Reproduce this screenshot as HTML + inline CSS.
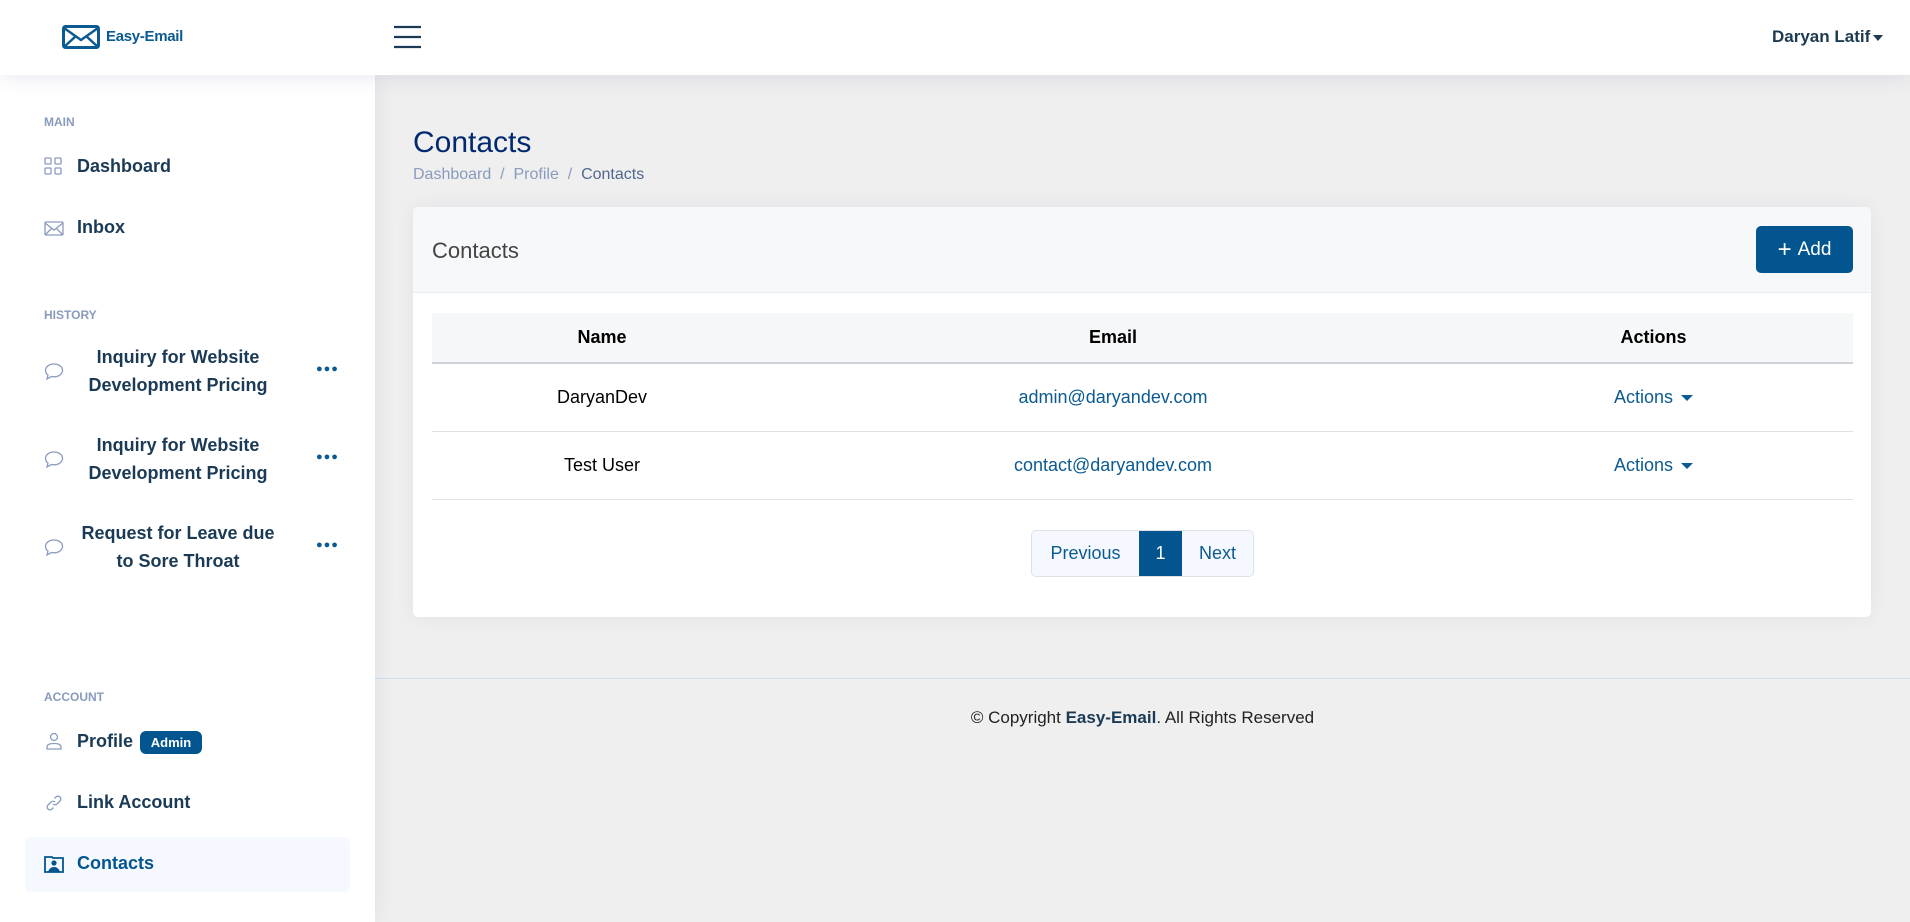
<!DOCTYPE html>
<html><head><meta charset="utf-8"><style>
*{box-sizing:border-box;margin:0;padding:0}
body{width:1910px;height:922px;overflow:hidden;background:#efefef;font-family:"Liberation Sans",Arial,sans-serif;position:relative}
.hdr{position:absolute;left:0;top:0;width:1910px;height:75px;background:#fff;box-shadow:0 2px 20px rgba(1,41,112,.1);z-index:3}
.side{position:absolute;left:0;top:75px;width:375px;height:847px;background:#fff;box-shadow:0 0 20px rgba(1,41,112,.08);z-index:2}
.abs{position:absolute;white-space:nowrap}
.lbl{font-size:12px;font-weight:bold;color:#899bbd;left:44px}
.nav{font-size:18px;font-weight:bold;color:#1b3a55;left:77px;line-height:22px}
.hist{position:absolute;left:64px;width:228px;text-align:center;font-size:18px;font-weight:bold;color:#1b3a55;line-height:28px}
.dots{position:absolute;left:316px;font-size:11px;font-weight:bold;color:#0b5a92;letter-spacing:1px}
.card{position:absolute;left:413px;top:207px;width:1458px;height:410px;background:#fff;border-radius:5px;box-shadow:0 0 20px rgba(1,41,112,.06);overflow:hidden}
.ch{height:86px;background:#f6f8fa;border-bottom:1px solid #e8edf5;position:relative}
table{position:absolute;left:19px;top:106px;width:1421px;border-collapse:collapse;font-size:18px}
th{height:50px;background:#f6f7f9;border-bottom:2px solid #cfd2d6;font-weight:bold;color:#000}
td{height:68px;text-align:center;border-bottom:1px solid #dee2e6;color:#000}
a{color:#0b5a92;text-decoration:none}
.caret{display:inline-block;width:0;height:0;border-left:6px solid transparent;border-right:6px solid transparent;border-top:6px solid currentColor;vertical-align:middle;margin-left:8px}
</style></head><body>
<div class="hdr">
<svg class="abs" style="left:62px;top:25px" width="38" height="24" viewBox="0 0 38 24"><rect x="1.5" y="1.5" width="35" height="21" rx="2" fill="none" stroke="#0b5a92" stroke-width="3"/><path d="M2 3 L19 15 L36 3 M2 22 L14 11 M36 22 L24 11" fill="none" stroke="#0b5a92" stroke-width="2.5"/></svg>
<div class="abs" style="left:106px;top:28px;font-size:15px;font-weight:bold;color:#0b5a92;letter-spacing:-0.3px">Easy-Email</div>
<svg class="abs" style="left:393px;top:25px" width="29" height="24"><path d="M1 2H28M1 12H28M1 22H28" stroke="#1b3a55" stroke-width="2.2"/></svg>
<div class="abs" style="left:1772px;top:27px;font-size:17px;font-weight:bold;color:#1e3a50">Daryan Latif<span class="caret" style="margin-left:3px;border-width:6px 5px 0 5px"></span></div>
</div>
<div class="side">
<div class="abs lbl" style="top:40px">MAIN</div>
<svg class="abs" style="left:44px;top:82px" width="18" height="18" fill="none" stroke="#8a9bbf" stroke-width="1.3"><rect x="1" y="1" width="6" height="6" rx="1"/><rect x="11" y="1" width="6" height="6" rx="1"/><rect x="1" y="11" width="6" height="6" rx="1"/><rect x="11" y="11" width="6" height="6" rx="1"/></svg>
<div class="abs nav" style="top:80px">Dashboard</div>
<svg class="abs" style="left:44px;top:146px" width="20" height="15" fill="none" stroke="#8a9bbf" stroke-width="1.3"><rect x="1" y="1" width="18" height="13" rx="1"/><path d="M1 2L10 9L19 2M1 14L8 7M19 14L12 7"/></svg>
<div class="abs nav" style="top:141px">Inbox</div>
<div class="abs lbl" style="top:233px">HISTORY</div>
<svg class="abs" style="left:44px;top:287px" width="20" height="18" fill="none" stroke="#8a9bbf" stroke-width="1.3"><path d="M10 2C5 2 1.5 5 1.5 8.5c0 2 1 3.5 2.5 4.5L3 17l4.5-2.5c.8.2 1.6.3 2.5.3 5 0 8.5-3 8.5-6.5S15 2 10 2z"/></svg>
<div class="hist" style="top:268px">Inquiry for Website<br>Development Pricing</div>
<div class="dots" style="top:288px">●●●</div>
<svg class="abs" style="left:44px;top:375px" width="20" height="18" fill="none" stroke="#8a9bbf" stroke-width="1.3"><path d="M10 2C5 2 1.5 5 1.5 8.5c0 2 1 3.5 2.5 4.5L3 17l4.5-2.5c.8.2 1.6.3 2.5.3 5 0 8.5-3 8.5-6.5S15 2 10 2z"/></svg>
<div class="hist" style="top:356px">Inquiry for Website<br>Development Pricing</div>
<div class="dots" style="top:376px">●●●</div>
<svg class="abs" style="left:44px;top:463px" width="20" height="18" fill="none" stroke="#8a9bbf" stroke-width="1.3"><path d="M10 2C5 2 1.5 5 1.5 8.5c0 2 1 3.5 2.5 4.5L3 17l4.5-2.5c.8.2 1.6.3 2.5.3 5 0 8.5-3 8.5-6.5S15 2 10 2z"/></svg>
<div class="hist" style="top:444px">Request for Leave due<br>to Sore Throat</div>
<div class="dots" style="top:464px">●●●</div>
<div class="abs lbl" style="top:615px">ACCOUNT</div>
<svg class="abs" style="left:46px;top:657px" width="16" height="18" fill="none" stroke="#8a9bbf" stroke-width="1.3"><circle cx="8" cy="5" r="3.5"/><path d="M1 17v-2c0-2 2-3.5 7-3.5s7 1.5 7 3.5v2z"/></svg>
<div class="abs nav" style="top:655px">Profile</div>
<div class="abs" style="left:140px;top:656px;width:62px;height:23px;background:#03558f;border-radius:6px;color:#fff;font-size:13px;font-weight:bold;text-align:center;line-height:23px">Admin</div>
<svg class="abs" style="left:46px;top:720px" width="16" height="16" fill="none" stroke="#8a9bbf" stroke-width="1.3"><path d="M7 9a3 3 0 0 0 4 0l3-3a2.8 2.8 0 0 0-4-4L8.5 3.5M9 7a3 3 0 0 0-4 0L2 10a2.8 2.8 0 0 0 4 4l1.5-1.5"/></svg>
<div class="abs nav" style="top:716px">Link Account</div>
<div class="abs" style="left:25px;top:762px;width:325px;height:55px;background:#f5f8fe;border-radius:5px"></div>
<svg class="abs" style="left:44px;top:780px" width="20" height="18"><path d="M1 2h7l1 1h10v14H1z" fill="none" stroke="#03558f" stroke-width="1.8"/><circle cx="10" cy="8" r="2.6" fill="#03558f"/><path d="M4 17c1-3.5 3.5-5 6-5s5 1.5 6 5z" fill="#03558f"/></svg>
<div class="abs nav" style="top:777px;color:#03558f">Contacts</div>
</div>
<div class="abs" style="left:413px;top:126px;font-size:30px;color:#012970">Contacts</div>
<div class="abs" style="left:413px;top:166px;font-size:16px;color:#899bbd">Dashboard&nbsp; / &nbsp;Profile&nbsp; / &nbsp;<span style="color:#51678f">Contacts</span></div>
<div class="card">
<div class="ch">
<div class="abs" style="left:19px;top:31px;font-size:22px;color:#444">Contacts</div>
<div class="abs" style="left:1343px;top:19px;width:97px;height:47px;background:#03558f;border-radius:5px;color:#fff;font-size:19px;line-height:47px;text-align:center"><span style="font-size:24px;vertical-align:-2px;margin-right:6px">+</span>Add</div>
</div>
<table>
<tr><th style="width:340px">Name</th><th style="width:682px">Email</th><th>Actions</th></tr>
<tr><td>DaryanDev</td><td><a>admin@daryandev.com</a></td><td><a>Actions<span class="caret"></span></a></td></tr>
<tr><td>Test User</td><td><a>contact@daryandev.com</a></td><td><a>Actions<span class="caret"></span></a></td></tr>
</table>
<div class="abs" style="left:618px;top:323px;height:47px;display:flex;border:1px solid #dee2e6;border-radius:5px;overflow:hidden;font-size:18px;line-height:45px">
<div style="width:107px;text-align:center;background:#f5f8fe;color:#0b5a92">Previous</div>
<div style="width:43px;text-align:center;background:#03558f;color:#fff">1</div>
<div style="width:71px;text-align:center;background:#f5f8fe;color:#0b5a92">Next</div>
</div>
</div>
<div class="abs" style="left:375px;top:678px;width:1535px;height:1px;background:#cddfef"></div>
<div class="abs" style="left:375px;width:1535px;top:708px;text-align:center;font-size:17px;color:#222">© Copyright <b style="color:#1b3a55">Easy-Email</b>. All Rights Reserved</div>
</body></html>
